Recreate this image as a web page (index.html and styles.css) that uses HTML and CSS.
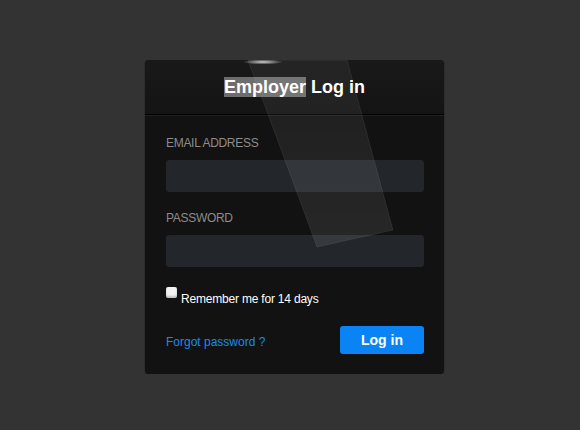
FILE: index.html
```html
<!DOCTYPE html>
<html>
<head>
<meta charset="utf-8">
<link rel="stylesheet" href="styles.css">
</head>
<body>
<div class="page">
  <div class="card">
    <svg class="glare" width="300" height="200" viewBox="0 0 300 200">
      <defs>
        <radialGradient id="spot" cx="0.5" cy="0.5" r="0.5">
          <stop offset="0" stop-color="#fff" stop-opacity="0.8"/>
          <stop offset="1" stop-color="#fff" stop-opacity="0"/>
        </radialGradient>
        <linearGradient id="sheet" x1="0" y1="0" x2="0" y2="1">
          <stop offset="0" stop-color="#fff" stop-opacity="0.05"/>
          <stop offset="1" stop-color="#fff" stop-opacity="0.09"/>
        </linearGradient>
      </defs>
      <polygon points="103,0 202,0 248,170 172,187" fill="url(#sheet)" stroke="#ffffff" stroke-opacity="0.07" stroke-width="1"/>
      <ellipse cx="118" cy="2" rx="20" ry="2.5" fill="url(#spot)"/>
    </svg>
    <div class="header">
      <h1 class="title"><span class="hl">Employer</span> Log in</h1>
    </div>
    <form class="form">
      <label class="label">EMAIL ADDRESS</label>
      <div class="input"></div>
      <label class="label label-pw">PASSWORD</label>
      <div class="input"></div>
      <div class="remember">
        <span class="check"></span>
        <span class="remember-text">Remember me for 14 days</span>
      </div>
      <div class="actions">
        <a class="forgot">Forgot password ?</a>
        <button class="btn" type="button">Log in</button>
      </div>
    </form>
  </div>
</div>
</body>
</html>
```
FILE: styles.css
```css
html, body {
  margin: 0;
  padding: 0;
  background: #333333;
  font-family: "Liberation Sans", Arial, sans-serif;
}
.page {
  padding: 60px 0 0 145px;
}
.card {
  position: relative;
  width: 299px;
  height: 314px;
  background: #121212;
  border-radius: 4px;
  box-shadow: 0 1px 2px rgba(0,0,0,0.4);
  overflow: hidden;
}
.glare {
  position: absolute;
  left: 0;
  top: 0;
  pointer-events: none;
}
.header {
  height: 54px;
  background: linear-gradient(#191919, #141414);
  border-bottom: 1px solid #000;
  box-shadow: 0 1px 0 #202020;
  display: flex;
  align-items: center;
  justify-content: center;
}
.title {
  margin: 0;
  font-size: 18px;
  font-weight: bold;
  color: #ffffff;
  line-height: 22px;
}
.hl {
  background: #6d6d6d;
}
.form {
  padding: 21px 20px 0 21px;
  display: flex;
  flex-direction: column;
}
.label {
  font-size: 12px;
  line-height: 14px;
  color: #8c8c8c;
  letter-spacing: -0.3px;
}
.label-pw {
  margin-top: 19px;
}
.input {
  margin-top: 10px;
  height: 32px;
  background: #23262b;
  border-radius: 3px;
}
.remember {
  margin-top: 20px;
  display: flex;
  align-items: flex-start;
  gap: 4px;
}
.check {
  width: 11px;
  height: 11px;
  background: #f2f2f2;
  border-radius: 2px;
  box-shadow: inset 0 -2px 2px rgba(0,0,0,0.2);
}
.remember-text {
  margin-top: 5px;
  font-size: 12px;
  line-height: 14px;
  color: #ffffff;
  letter-spacing: -0.2px;
}
.actions {
  margin-top: 20px;
  display: flex;
  align-items: center;
  justify-content: space-between;
}
.forgot {
  margin-top: 3px;
  font-size: 12px;
  color: #1b8be6;
}
.btn {
  width: 84px;
  height: 28px;
  border: 0;
  border-radius: 3px;
  background: #0a84f5;
  color: #ffffff;
  font-family: "Liberation Sans", Arial, sans-serif;
  font-size: 14px;
  font-weight: bold;
  padding: 0;
}
```
